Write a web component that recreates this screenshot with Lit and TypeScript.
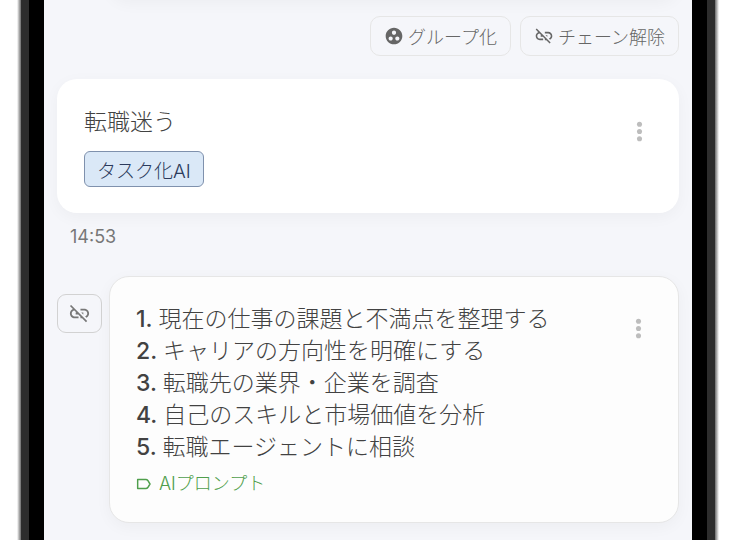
import { LitElement, html, css, svg } from "lit";
import { customElement } from "lit/decorators.js";

const linkOff = svg`<path d="M17 7h-4v1.9h4c1.71 0 3.1 1.39 3.1 3.1 0 1.43-.98 2.63-2.31 2.98l1.46 1.46C20.88 15.61 22 13.95 22 12c0-2.76-2.24-5-5-5zm-1 4h-2.19l2 2H16zM2 4.27l3.11 3.11C3.29 8.12 2 9.91 2 12c0 2.76 2.24 5 5 5h4v-1.9H7c-1.71 0-3.1-1.39-3.1-3.1 0-1.59 1.21-2.9 2.76-3.07L8.73 11H8v2h2.73L13 15.27V17h1.73l4.01 4L20 19.74 3.27 3 2 4.27z"/>`;
const groupWork = svg`<path d="M12 2C6.48 2 2 6.48 2 12s4.48 10 10 10 10-4.48 10-10S17.52 2 12 2zM8 17.5c-1.38 0-2.5-1.12-2.5-2.5s1.12-2.5 2.5-2.5 2.5 1.12 2.5 2.5-1.12 2.5-2.5 2.5zM9.5 8c0-1.38 1.12-2.5 2.5-2.5s2.5 1.12 2.5 2.5-1.12 2.5-2.5 2.5S9.5 9.38 9.5 8zm6.5 9.5c-1.38 0-2.5-1.12-2.5-2.5s1.12-2.5 2.5-2.5 2.5 1.12 2.5 2.5-1.12 2.5-2.5 2.5z"/>`;
const moreVert = svg`<circle cx="12" cy="6" r="2.1"/><circle cx="12" cy="12" r="2.1"/><circle cx="12" cy="18" r="2.1"/>`;
const label = svg`<path d="M2.5 5.2h12.3c1.3 0 2.2.5 2.9 1.5L21 12l-3.3 5.3c-.7 1-1.6 1.5-2.9 1.5H2.5z" fill="none" stroke="currentColor" stroke-width="2.2" stroke-linejoin="round"/>`;

const steps = [
  "現在の仕事の課題と不満点を整理する",
  "キャリアの方向性を明確にする",
  "転職先の業界・企業を調査",
  "自己のスキルと市場価値を分析",
  "転職エージェントに相談",
];

@customElement("app-root")
export class AppRoot extends LitElement {
  static styles = css`
    :host {
      display: block;
      background: #fff;
      font-family: Inter, "Noto Sans CJK JP", sans-serif;
      font-weight: 300;
      color: #424242;
    }
    * {
      box-sizing: border-box;
    }
    button {
      font: inherit;
      color: inherit;
      background: none;
      border: 0;
      padding: 0;
      margin: 0;
      display: flex;
      align-items: center;
      justify-content: center;
      cursor: pointer;
    }
    svg {
      display: block;
      fill: currentColor;
      flex: none;
    }
    .device {
      margin: 0 17px;
      padding: 0 4px;
      background: linear-gradient(90deg, #fff, #6a6a6a 4px, #6a6a6a calc(100% - 4px), #fff);
    }
    .frame {
      padding: 0 8px;
      background: #2d2d2d;
    }
    .bezel {
      padding: 0 15px;
      background: #000;
    }
    .screen {
      min-height: 100vh;
      padding: 0 13px 18px;
      background: #f5f6fa;
      overflow: hidden;
      display: flex;
      flex-direction: column;
    }
    .card {
      border-radius: 20px;
      background: #fff;
      box-shadow: 0 4px 16px rgba(0, 0, 0, 0.04);
      display: flex;
      align-items: flex-start;
      justify-content: space-between;
    }
    .previous {
      height: 40px;
      margin: -41px 0 0 52px;
    }
    .actions {
      display: flex;
      justify-content: flex-end;
      gap: 9px;
      margin: 17px 0 23px;
    }
    .action {
      height: 40px;
      padding: 0 13px;
      gap: 4px;
      border: 1px solid #e6e6e6;
      border-radius: 10px;
      font-size: 18px;
      color: #666;
    }
    .action svg {
      width: 20px;
      height: 20px;
    }
    .note {
      padding: 27px 25px 26px 27px;
    }
    .title {
      margin: 0;
      font-size: 23px;
      line-height: 32px;
      font-weight: 300;
    }
    .chip {
      height: 36px;
      margin-top: 13px;
      padding: 0 12px;
      border: 1px solid #7f91ad;
      border-radius: 6px;
      background: #dae8f7;
      color: #2b3a5c;
      font-size: 19px;
    }
    .more {
      width: 29px;
      color: #bdbdbd;
      margin-top: 11px;
    }
    .more svg {
      width: 29px;
      height: 29px;
    }
    .time {
      margin: 12px 0 27px 13px;
      font-size: 18px;
      line-height: 24px;
      font-weight: 400;
      color: #777;
    }
    .chain {
      display: flex;
      align-items: flex-start;
      gap: 7px;
    }
    .unlink {
      flex: none;
      width: 45px;
      height: 39px;
      margin-top: 18px;
      border: 1px solid #d2d2d2;
      border-radius: 9px;
      color: #777;
    }
    .unlink svg {
      width: 23px;
      height: 23px;
    }
    .result {
      flex: 1;
      padding: 26px 25px 24px 26px;
      border: 1px solid #e6e6e6;
      background: #fdfdfd;
    }
    .steps {
      margin: 0;
      padding: 0;
      list-style: none;
      counter-reset: step;
      font-size: 23px;
      line-height: 32px;
    }
    .steps li {
      counter-increment: step;
    }
    .steps li::before {
      content: counter(step) ". ";
      font-weight: 500;
    }
    .prompt {
      display: flex;
      align-items: center;
      gap: 7px;
      margin-top: 7px;
      font-size: 18px;
      line-height: 28px;
      color: #4f9f4c;
      text-decoration: none;
    }
    .prompt svg {
      width: 16px;
      height: 16px;
    }
  `;

  private icon(shape: unknown) {
    return html`<svg viewBox="0 0 24 24" aria-hidden="true">${shape}</svg>`;
  }

  private more() {
    return html`<button class="more" aria-label="メニュー">${this.icon(moreVert)}</button>`;
  }

  render() {
    return html`
      <div class="device"><div class="frame"><div class="bezel">
        <main class="screen">
          <div class="card previous"></div>
          <div class="actions">
            <button class="action">${this.icon(groupWork)}<span>グループ化</span></button>
            <button class="action">${this.icon(linkOff)}<span>チェーン解除</span></button>
          </div>
          <article class="card note">
            <div>
              <h2 class="title">転職迷う</h2>
              <button class="chip">タスク化AI</button>
            </div>
            ${this.more()}
          </article>
          <time class="time">14:53</time>
          <div class="chain">
            <button class="unlink" aria-label="チェーン解除">${this.icon(linkOff)}</button>
            <article class="card result">
              <div>
                <ol class="steps">${steps.map((s) => html`<li>${s}</li>`)}</ol>
                <a class="prompt" href="#">${this.icon(label)}<span>AIプロンプト</span></a>
              </div>
              ${this.more()}
            </article>
          </div>
        </main>
      </div></div></div>
    `;
  }
}
